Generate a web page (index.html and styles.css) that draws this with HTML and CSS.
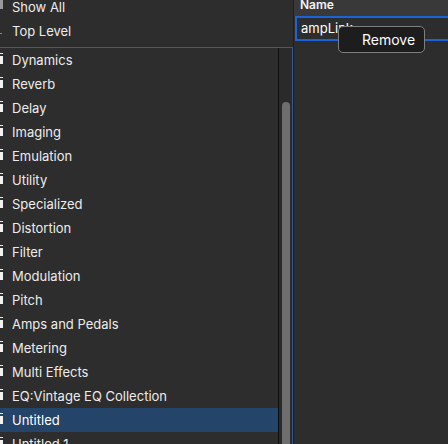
FILE: index.html
```html
<!DOCTYPE html>
<html lang="en-US">
<head>
    <meta charset="UTF-8">
    <meta name="viewport" content="width=device-width, initial-scale=1.0">
    <title>Plug-in Presets</title>
    <link rel="stylesheet" href="styles.css">
</head>
<body>
    <div class="window">
        <div class="sidebar">
            <div class="top-items">
                <div class="row"><span class="glyph dim"></span>Show All</div>
                <div class="row"><span class="glyph dot"></span>Top Level</div>
            </div>

            <div class="folders">
                <ul class="folder-list">
                    <li class="row"><span class="glyph"></span>Dynamics</li>
                    <li class="row"><span class="glyph"></span>Reverb</li>
                    <li class="row"><span class="glyph"></span>Delay</li>
                    <li class="row"><span class="glyph"></span>Imaging</li>
                    <li class="row"><span class="glyph"></span>Emulation</li>
                    <li class="row"><span class="glyph"></span>Utility</li>
                    <li class="row"><span class="glyph"></span>Specialized</li>
                    <li class="row"><span class="glyph"></span>Distortion</li>
                    <li class="row"><span class="glyph"></span>Filter</li>
                    <li class="row"><span class="glyph"></span>Modulation</li>
                    <li class="row"><span class="glyph"></span>Pitch</li>
                    <li class="row"><span class="glyph"></span>Amps and Pedals</li>
                    <li class="row"><span class="glyph"></span>Metering</li>
                    <li class="row"><span class="glyph"></span>Multi Effects</li>
                    <li class="row"><span class="glyph"></span>EQ:Vintage EQ Collection</li>
                    <li class="row selected"><span class="glyph"></span>Untitled</li>
                    <li class="row"><span class="glyph"></span>Untitled 1</li>
                </ul>
                <div class="scrollbar">
                    <div class="thumb"></div>
                </div>
            </div>
        </div>

        <div class="detail">
            <div class="col-header">Name</div>
            <div class="name-cell">ampLink</div>

            <!-- context menu over the cell being edited -->
            <div class="menu">
                <div class="menu-item">Remove</div>
            </div>
        </div>
    </div>
</body>
</html>
```

FILE: styles.css
```css
:root {
    --ui-font: "Inter", "Liberation Sans", sans-serif;
    --bg-color: #2d2d2d;
    --text-color: #ececec;
    --select-color: #24446a;
    --focus-color: #1b63d9;
}

* {
    margin: 0;
    padding: 0;
    box-sizing: border-box;
}

body {
    font-family: var(--ui-font);
    font-size: 13px;
    color: var(--text-color);
    background-color: var(--bg-color);
    width: 448px;
    height: 444px;
    overflow: hidden;
}

.window {
    display: flex;
    height: 444px;
}

/* left column: preset folders */
.sidebar {
    width: 293px;
    flex-shrink: 0;
    display: flex;
    flex-direction: column;
}

.top-items {
    margin-top: -5px;
    height: 52px;
}

.row {
    position: relative;
    height: 24px;
    line-height: 24px;
    padding-left: 12px;
    white-space: nowrap;
    list-style: none;
}

.row.selected {
    background-color: var(--select-color);
    color: #fff;
}

/* clipped folder icon at the left edge */
.glyph {
    position: absolute;
    left: 0;
    top: 8px;
    width: 3px;
    height: 8px;
    background: #f2f2f2;
}

.glyph::before {
    content: "";
    position: absolute;
    left: 0;
    top: -3px;
    width: 3px;
    height: 1px;
    background: #f2f2f2;
}

.glyph.dim {
    top: 5px;
    height: 9px;
    background: #9a9a9a;
}

.glyph.dim::before {
    display: none;
}

.glyph.dot {
    top: 14px;
    width: 2px;
    height: 1px;
    background: #8a8a8a;
}

.glyph.dot::before {
    display: none;
}

.folders {
    flex: 1;
    display: flex;
    border-top: 1px solid #4a5872;
    border-right: 1px solid #3a5894;
    overflow: hidden;
}

.folder-list {
    width: 279px;
    border-right: 1px solid #0f0f0f;
}

.scrollbar {
    width: 13px;
    padding: 54px 1px 0 3px;
    background: #2a2a2a;
}

.thumb {
    width: 8px;
    height: 400px;
    border-radius: 4px;
    background: #6e6e6e;
}

/* right column: preset names */
.detail {
    position: relative;
    flex: 1;
    border-left: 1px solid #1e1e1e;
    overflow: hidden;
}

.col-header {
    height: 16px;
    line-height: 10px;
    padding-left: 6px;
    font-size: 12px;
    font-weight: 600;
    color: #f4f4f4;
    background: #393939;
}

.name-cell {
    margin-left: 1px;
    width: 200px;
    height: 25px;
    line-height: 21px;
    padding-left: 4px;
    border: 2px solid var(--focus-color);
    color: #fff;
    white-space: nowrap;
}

.menu {
    position: absolute;
    left: 44px;
    top: 26px;
    width: 87px;
    height: 27px;
    background: #1d1d1d;
    border: 1px solid #7f7f7f;
    border-radius: 5px;
}

.menu-item {
    line-height: 25px;
    padding-left: 23px;
    font-size: 14px;
    color: #fff;
}
```
